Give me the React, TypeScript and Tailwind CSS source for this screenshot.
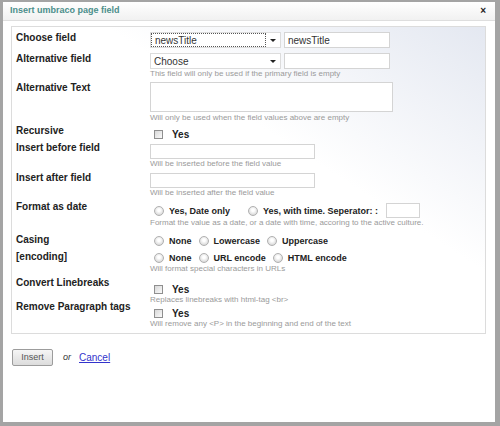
import type { ReactNode } from 'react';

const font = { fontFamily: '"Liberation Sans", Arial, sans-serif' };

const Label = ({ children }: { children: ReactNode }) => (
  <div className="w-[134px] shrink-0 text-[10px] font-bold leading-[12px] text-[#222]">{children}</div>
);

const Hint = ({ children }: { children: ReactNode }) => (
  <div className="text-[8px] leading-[9px] text-[#9a9a9a]">{children}</div>
);

const TextBox = ({ className = '', value = '' }: { className?: string; value?: string }) => (
  <div
    className={`flex items-center border border-[#d4d4d4] bg-white px-[3px] text-[10px] text-[#333] ${className}`}
  >
    {value}
  </div>
);

const Select = ({ value, focused = false }: { value: string; focused?: boolean }) => (
  <div className="flex h-[16px] w-[131px] items-center border border-[#dcdcdc] bg-white">
    <div
      className={`flex h-full flex-1 items-center px-[3px] text-[10px] text-[#333] ${
        focused ? 'border border-dotted border-[#555]' : ''
      }`}
    >
      {value}
    </div>
    <div className="flex w-[14px] justify-center">
      <span className="h-0 w-0 border-x-[3px] border-t-[3px] border-x-transparent border-t-[#222]" />
    </div>
  </div>
);

const Checkbox = () => (
  <span className="inline-block h-[9px] w-[9px] border border-[#8f8f8f] bg-gradient-to-br from-[#d8d8d8] to-[#fafafa]" />
);

const Radio = ({ label, className = '' }: { label: string; className?: string }) => (
  <span className={`flex items-center ${className}`}>
    <span className="inline-block h-[10px] w-[10px] rounded-full border border-[#b0b0b0] bg-[radial-gradient(circle_at_50%_40%,#ffffff_20%,#d0d0d0_90%)]" />
    <span className="ml-[5px] text-[9px] font-bold leading-[12px] text-[#222]">{label}</span>
  </span>
);

const CheckYes = () => (
  <div className="flex h-[11px] items-center pl-[4px] leading-none">
    <Checkbox />
    <span className="ml-[9px] text-[10px] font-bold leading-[11px] text-[#222]">Yes</span>
  </div>
);

export default function App() {
  return (
    <div style={font} className="h-[426px] w-[500px] bg-[#a4a4a4] pb-[4px] pl-[3px] pr-[5px] pt-[2px]">
      <div className="flex h-full flex-col bg-white">
        <div className="flex h-[19px] shrink-0 items-center justify-between border-b border-[#dedede] bg-gradient-to-b from-white to-[#f1f1f1] pl-[7px] pr-[9px]">
          <span className="text-[9px] font-bold text-[#4b8e8b]">Insert umbraco page field</span>
          <span className="text-[10px] font-bold leading-none text-[#222]">×</span>
        </div>

        <div className="ml-[8px] mr-[9px] mt-[5px] h-[308px] border border-[#dcdcdc] bg-[linear-gradient(to_bottom_left,#e4e8f1_0%,#ffffff_40%)] pl-[4px] pt-[5px]">
          <div className="flex h-[21px]">
            <Label>Choose field</Label>
            <div className="flex gap-[3px]">
              <Select value="newsTitle" focused />
              <TextBox className="h-[16px] w-[106px]" value="newsTitle" />
            </div>
          </div>

          <div className="flex h-[29px]">
            <Label>Alternative field</Label>
            <div className="flex flex-col">
              <div className="flex gap-[3px]">
                <Select value="Choose" />
                <TextBox className="h-[16px] w-[106px]" />
              </div>
              <Hint>This field will only be used if the primary field is empty</Hint>
            </div>
          </div>

          <div className="flex h-[43px]">
            <Label>Alternative Text</Label>
            <div className="flex flex-col">
              <TextBox className="h-[30px] w-[243px]" />
              <div className="mt-[1px]">
                <Hint>Will only be used when the field values above are empty</Hint>
              </div>
            </div>
          </div>

          <div className="flex h-[17px]">
            <Label>Recursive</Label>
            <div className="mt-[4px]">
              <CheckYes />
            </div>
          </div>

          <div className="flex h-[30px]">
            <Label>Insert before field</Label>
            <div className="mt-[2px] flex flex-col">
              <TextBox className="h-[15px] w-[165px]" />
              <Hint>Will be inserted before the field value</Hint>
            </div>
          </div>

          <div className="flex h-[29px]">
            <Label>Insert after field</Label>
            <div className="mt-[1px] flex flex-col">
              <TextBox className="h-[15px] w-[165px]" />
              <Hint>Will be inserted after the field value</Hint>
            </div>
          </div>

          <div className="flex h-[33px]">
            <Label>Format as date</Label>
            <div className="mt-[2px] flex flex-col">
              <div className="flex h-[15px] items-center pl-[4px]">
                <Radio label="Yes, Date only" className="mr-[18px]" />
                <Radio label="Yes, with time. Seperator: :" className="mr-[8px]" />
                <TextBox className="h-[15px] w-[34px]" />
              </div>
              <Hint>Format the value as a date, or a date with time, accoring to the active culture.</Hint>
            </div>
          </div>

          <div className="flex h-[17px]">
            <Label>Casing</Label>
            <div className="mt-[1px] flex h-[12px] items-center gap-[7px] pl-[4px]">
              <Radio label="None" />
              <Radio label="Lowercase" />
              <Radio label="Uppercase" />
            </div>
          </div>

          <div className="flex h-[26px]">
            <Label>[encoding]</Label>
            <div className="mt-[1px] flex flex-col">
              <div className="flex h-[12px] items-center gap-[7px] pl-[4px]">
                <Radio label="None" />
                <Radio label="URL encode" />
                <Radio label="HTML encode" />
              </div>
              <Hint>Will format special characters in URLs</Hint>
            </div>
          </div>

          <div className="flex h-[24px]">
            <Label>Convert Linebreaks</Label>
            <div className="mt-[7px] flex flex-col">
              <CheckYes />
              <Hint>Replaces linebreaks with html-tag &lt;br&gt;</Hint>
            </div>
          </div>

          <div className="flex">
            <Label>Remove Paragraph tags</Label>
            <div className="mt-[7px] flex flex-col">
              <CheckYes />
              <Hint>Will remove any &lt;P&gt; in the beginning and end of the text</Hint>
            </div>
          </div>
        </div>

        <div className="ml-[9px] mt-[15px] flex items-center">
          <button
            type="button"
            className="h-[17px] w-[41px] rounded-[2px] border border-[#9c9c9c] bg-gradient-to-b from-[#f6f6f6] to-[#dcdcdc] text-[9px] text-[#555]"
          >
            Insert
          </button>
          <span className="ml-[10px] text-[9px] italic text-[#333]">or</span>
          <a href="#" className="ml-[8px] text-[10px] text-[#3333cc] underline">
            Cancel
          </a>
        </div>
      </div>
    </div>
  );
}
